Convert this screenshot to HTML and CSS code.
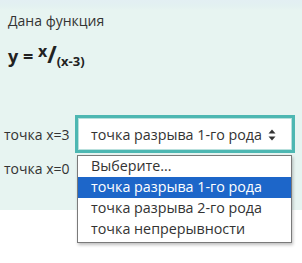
FILE: index.html
```html
<!DOCTYPE html>
<html lang="ru">
<head>
<meta charset="utf-8">
<link rel="stylesheet" href="styles.css">
</head>
<body>
<div class="panel">
  <div class="title">Дана функция</div>
  <div class="formula">y = <sup class="num">x</sup><span class="slash">/</span><sub class="den">(x-3)</sub></div>
  <div class="row row-first">
    <span class="label">точка x=3</span>
    <div class="select-wrap">
      <div class="select">
        <span class="value">точка разрыва 1-го рода</span>
        <svg class="arrows" width="8" height="12" viewBox="0 0 8 12"><path d="M4 0.5 L7.5 4.5 H0.5 Z M4 11.5 L7.5 7.5 H0.5 Z" fill="#333"/></svg>
      </div>
      <ul class="dropdown">
        <li>Выберите...</li>
        <li class="active">точка разрыва 1-го рода</li>
        <li>точка разрыва 2-го рода</li>
        <li>точка непрерывности</li>
      </ul>
    </div>
  </div>
  <div class="row row-second">
    <span class="label">точка x=0</span>
  </div>
</div>
</body>
</html>
```
FILE: styles.css
```css
html, body {
  margin: 0;
  padding: 0;
  background: #ffffff;
}
body {
  font-family: "Open Sans", "Noto Sans", sans-serif;
  color: #333333;
  width: 302px;
  height: 263px;
  overflow: hidden;
}
.panel {
  background: linear-gradient(#e3eff3 0, #e3f1f1 6px, #e7f4f1 10px);
  height: 210px;
  box-sizing: border-box;
  padding: 11px 0 0 0;
}
.title {
  font-size: 14px;
  line-height: 20px;
  padding-left: 8px;
}
.formula {
  font-size: 18px;
  font-weight: bold;
  line-height: 24px;
  padding-left: 8px;
  margin-top: 11px;
  color: #222;
}
.formula .num {
  font-size: 16px;
  vertical-align: 0;
  position: relative;
  top: -6px;
}
.formula .slash {
  font-size: 23px;
  font-weight: bold;
}
.formula .den {
  font-size: 13px;
  vertical-align: 0;
  position: relative;
  top: 3px;
}
.row {
  display: flex;
  align-items: center;
}
.row-first {
  margin-top: 45px;
}
.row-second {
  margin-top: 0;
  height: 30px;
}
.label {
  font-size: 14px;
  padding-left: 4px;
  width: 71px;
  white-space: nowrap;
}
.select-wrap {
  position: relative;
}
.select {
  width: 220px;
  height: 38px;
  box-sizing: border-box;
  border: 3px solid #4db7b2;
  background: #ffffff;
  box-shadow: inset 0 0 0 1px #b9e0dd;
  display: flex;
  align-items: center;
  padding: 1px 16px 0 13px;
}
.value {
  font-size: 14.3px;
  white-space: nowrap;
}
.arrows {
  display: block;
  margin-left: auto;
}
.dropdown {
  position: absolute;
  left: 2px;
  top: 40px;
  width: 215px;
  box-sizing: border-box;
  margin: 0;
  padding: 0 0 2px 0;
  list-style: none;
  background: #ffffff;
  border: 1px solid #7a7a7a;
  box-shadow: 1px 2px 3px rgba(0, 0, 0, 0.25);
}
.dropdown li {
  font-size: 14.3px;
  line-height: 20px;
  height: 21px;
  padding-left: 13px;
  white-space: nowrap;
  color: #333;
}
.dropdown li.active {
  background: #1d66c9;
  color: #ffffff;
}
```
